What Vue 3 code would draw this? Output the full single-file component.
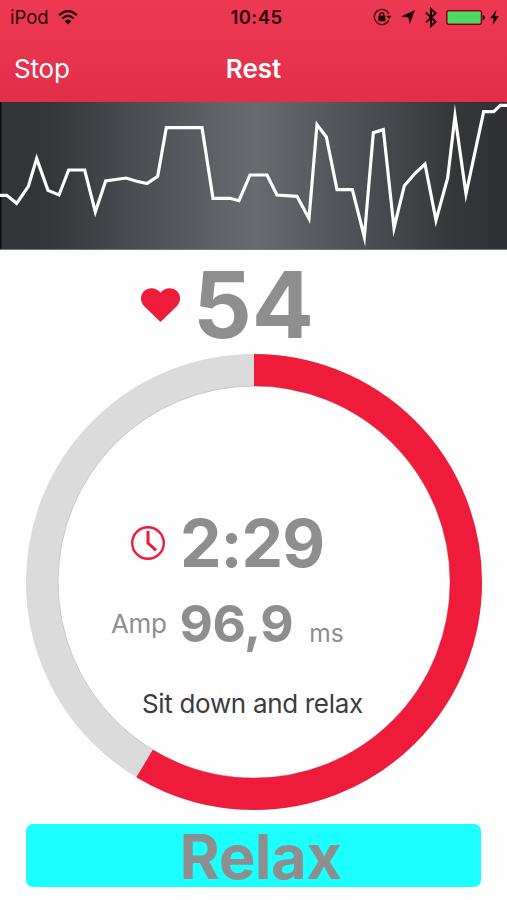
<template>
  <div class="screen">
    <header class="header">
      <div class="status-bar">
        <div class="status-left">
          <span class="device">iPod</span>
          <svg class="wifi" viewBox="0 0 20 15" width="20" height="15">
            <path d="M1.2 5.2Q10-3.2 18.8 5.2" class="wifi-arc" />
            <path d="M4.3 8.5Q10 3.3 15.7 8.5" class="wifi-arc" />
            <path d="M6.6 11Q10 8 13.4 11L10 14.6Z" />
          </svg>
        </div>
        <span class="clock">10:45</span>
        <div class="status-right">
          <svg class="lock" viewBox="0 0 19 18" width="19" height="18">
            <path d="M15.7 12.4A7.6 7.6 0 1 1 15.9 6" fill="none" stroke="#3a0610" stroke-width="1.3" />
            <path d="M13.4 7.8h5.2l-2.6 3.4z" />
            <rect x="5.4" y="7.8" width="7" height="5.4" rx="0.5" />
            <path d="M7 8.4V6.6a1.9 1.9 0 0 1 3.8 0v1.8" fill="none" stroke="#1d0307" stroke-width="1.3" />
          </svg>
          <svg class="location" viewBox="0 0 14 14" width="14" height="14">
            <path d="M14 0L8.8 14L7.4 7.4L0 6.6Z" />
          </svg>
          <svg class="bluetooth" viewBox="0 0 12 21" width="12" height="21">
            <path d="M1 5.6L10.6 14.8L6 19V2L10.6 6.2L1 15.4" fill="none" stroke="#1d0307" stroke-width="2" />
          </svg>
          <svg class="battery" viewBox="0 0 39 15" width="39" height="15">
            <rect x="0.7" y="0.7" width="34.8" height="13.6" rx="1.8" fill="none" stroke="#521019" stroke-width="1.3" />
            <rect x="1.8" y="1.8" width="32.6" height="11.4" rx="0.6" fill="#4cd964" />
            <path d="M36.6 5Q39 5.4 39 7.5Q39 9.6 36.6 10Z" />
          </svg>
          <svg class="bolt" viewBox="0 0 9 15" width="9" height="15">
            <path d="M6.4 0L0.2 8.2H3.9L2.4 15L8.8 6.2H5Z" />
          </svg>
        </div>
      </div>
      <nav class="nav-bar">
        <button class="stop">Stop</button>
        <h1 class="title">Rest</h1>
      </nav>
    </header>

    <section class="chart">
      <svg viewBox="0 12 1521 444" width="507" height="148">
        <polyline :points="trace" />
      </svg>
    </section>

    <section class="heart-rate">
      <svg class="heart" viewBox="0 0 39 34" width="39" height="34">
        <path d="M19.5 34L3.2 18.2C-1.3 13.7-.9 6.6 3.1 2.9C7.7-1.2 15.6-.8 19.5 4.8C23.4-.8 31.3-1.2 35.9 2.9C39.9 6.6 40.3 13.7 35.8 18.2Z" />
      </svg>
      <span class="bpm">{{ heartRate }}</span>
    </section>

    <section class="ring">
      <svg class="ring-svg" viewBox="0 0 456 456" width="456" height="456">
        <circle cx="228" cy="228" :r="radius" class="ring-track" />
        <circle cx="228" cy="228" r="196" class="ring-edge" />
        <circle
          cx="228"
          cy="228"
          :r="radius"
          class="ring-progress"
          :stroke-dasharray="`${circumference * progress} ${circumference}`"
          transform="rotate(-90 228 228)"
        />
      </svg>
      <div class="readout">
        <div class="time-row">
          <svg class="timer" viewBox="0 0 34 34" width="34" height="34">
            <circle cx="17" cy="17" r="15.8" />
            <path d="M17 5V17.2L25 24.4" />
          </svg>
          <span class="time">{{ timeLeft }}</span>
        </div>
        <div class="amp-row">
          <span class="amp-label">Amp</span>
          <span class="amp">{{ amplitude }}</span>
          <span class="unit">ms</span>
        </div>
        <p class="hint">Sit down and relax</p>
      </div>
    </section>

    <button class="relax">Relax</button>
  </div>
</template>

<script setup>
import { computed, ref } from 'vue'

const heartRate = ref(54)
const amplitude = ref('96,9')
const duration = 360
const remaining = ref(149)

const radius = 212
const circumference = 2 * Math.PI * radius

const progress = computed(() => 1 - remaining.value / duration)
const timeLeft = computed(() => {
  const seconds = String(remaining.value % 60).padStart(2, '0')
  return `${Math.floor(remaining.value / 60)}:${seconds}`
})

const samples = [
  [-10, 292], [20, 292], [50, 316], [85, 265], [110, 182], [144, 277],
  [177, 291], [206, 216], [254, 216], [286, 342], [317, 249], [378, 240],
  [410, 250], [441, 257], [473, 235], [499, 89], [606, 89], [639, 301],
  [690, 301], [717, 308], [750, 231], [801, 231], [831, 291], [891, 295],
  [927, 362], [951, 80], [979, 117], [1011, 275], [1057, 275], [1093, 417],
  [1120, 104], [1150, 95], [1182, 390], [1213, 263], [1246, 225], [1275, 198],
  [1308, 367], [1343, 240], [1365, 54], [1398, 288], [1451, 41], [1481, 41],
  [1501, 22], [1530, 22]
]
const trace = samples.map((point) => point.join(',')).join(' ')
</script>

<style>
body {
  margin: 0;
  background: #fefefe;
}
</style>

<style scoped>
.screen {
  width: 507px;
  height: 900px;
  overflow: hidden;
  display: flex;
  flex-direction: column;
  background: #fefefe;
  font-family: Inter, "Liberation Sans", sans-serif;
  color: #8e8e8e;
}

button {
  border: 0;
  padding: 0;
  font-family: inherit;
}

svg {
  display: block;
  flex-shrink: 0;
}

.header {
  height: 102px;
  flex-shrink: 0;
  background: linear-gradient(#ed3954, #e22e48);
}

.status-bar {
  height: 34px;
  display: grid;
  grid-template-columns: 1fr auto 1fr;
  align-items: center;
  padding: 0 8px 0 10px;
  color: #2b050b;
  fill: #1d0307;
}

.status-left {
  display: flex;
  align-items: center;
  gap: 9px;
}

.device {
  font-size: 18.5px;
}

.wifi-arc {
  fill: none;
  stroke: #1d0307;
  stroke-width: 2.3;
}

.clock {
  font-size: 18.5px;
  font-weight: 600;
  letter-spacing: 0.4px;
  padding-left: 4px;
}

.status-right {
  display: flex;
  align-items: center;
  justify-content: flex-end;
}

.location {
  margin-left: 9px;
}

.bluetooth {
  margin-left: 10px;
}

.battery {
  margin-left: 9px;
}

.bolt {
  margin-left: 5px;
}

.nav-bar {
  height: 68px;
  display: grid;
  grid-template-columns: 1fr auto 1fr;
  align-items: center;
  padding: 0 14px;
  color: #fff;
}

.stop {
  justify-self: start;
  background: none;
  color: #fff;
  font-size: 26px;
  letter-spacing: -0.2px;
}

.title {
  margin: 0;
  font-size: 26px;
  font-weight: 600;
}

.chart {
  height: 148px;
  flex-shrink: 0;
  box-sizing: border-box;
  background: linear-gradient(90deg, #0c0d0e 0, #0c0d0e 1px, #333437 2px, #35363a 10%, #6a6b71 50%, #35363a 90%, #2f3033);
  border-bottom: 1px solid #77777a;
}

.chart polyline {
  fill: none;
  stroke: #fff;
  stroke-width: 9.5;
  stroke-linejoin: miter;
  stroke-miterlimit: 10;
}

.heart-rate {
  height: 104px;
  flex-shrink: 0;
  display: flex;
  align-items: center;
  padding-left: 141px;
}

.heart {
  fill: #ee1b3a;
  margin-top: 6px;
}

.bpm {
  margin-left: 13px;
  font-size: 92px;
  line-height: 104px;
  font-weight: 700;
  letter-spacing: 0;
  padding-top: 6px;
}

.ring {
  width: 456px;
  height: 456px;
  flex-shrink: 0;
  margin-left: 26px;
  display: grid;
}

.ring-svg,
.readout {
  grid-area: 1 / 1;
}

.ring-svg circle {
  fill: none;
}

.ring-track {
  stroke: #dbdbdb;
  stroke-width: 32;
}

.ring-edge {
  stroke: #c8c8c8;
  stroke-width: 1;
}

.ring-progress {
  stroke: #ee1b3a;
  stroke-width: 32;
}

.readout {
  padding-top: 149px;
}

.time-row {
  height: 80px;
  display: flex;
  align-items: center;
  padding-left: 105px;
}

.timer {
  fill: none;
  stroke: #ee1b3a;
  stroke-width: 2.4;
}

.timer path {
  stroke-width: 3;
}

.time {
  margin-left: 15px;
  font-size: 66px;
  font-weight: 700;
  letter-spacing: -1px;
}

.amp-row {
  height: 80px;
  display: flex;
  align-items: baseline;
  line-height: 80px;
  padding-left: 85px;
}

.amp-label {
  font-size: 26px;
  letter-spacing: -0.4px;
  position: relative;
  top: -9px;
}

.amp {
  margin-left: 13px;
  font-size: 51.5px;
  font-weight: 700;
  letter-spacing: -0.4px;
}

.unit {
  margin-left: 16px;
  font-size: 24.5px;
}

.hint {
  margin: 0;
  padding-left: 116px;
  line-height: 82px;
  font-size: 26px;
  letter-spacing: -0.32px;
  color: #3c3c3e;
  white-space: nowrap;
}

.relax {
  width: 455px;
  height: 63px;
  flex-shrink: 0;
  margin: 14px 0 0 26px;
  padding: 2px 0 0 14px;
  border-radius: 7px;
  background: #1bffff;
  color: #8e8e8e;
  font-size: 61.5px;
  line-height: 61px;
  font-weight: 700;
  letter-spacing: -0.5px;
}
</style>
